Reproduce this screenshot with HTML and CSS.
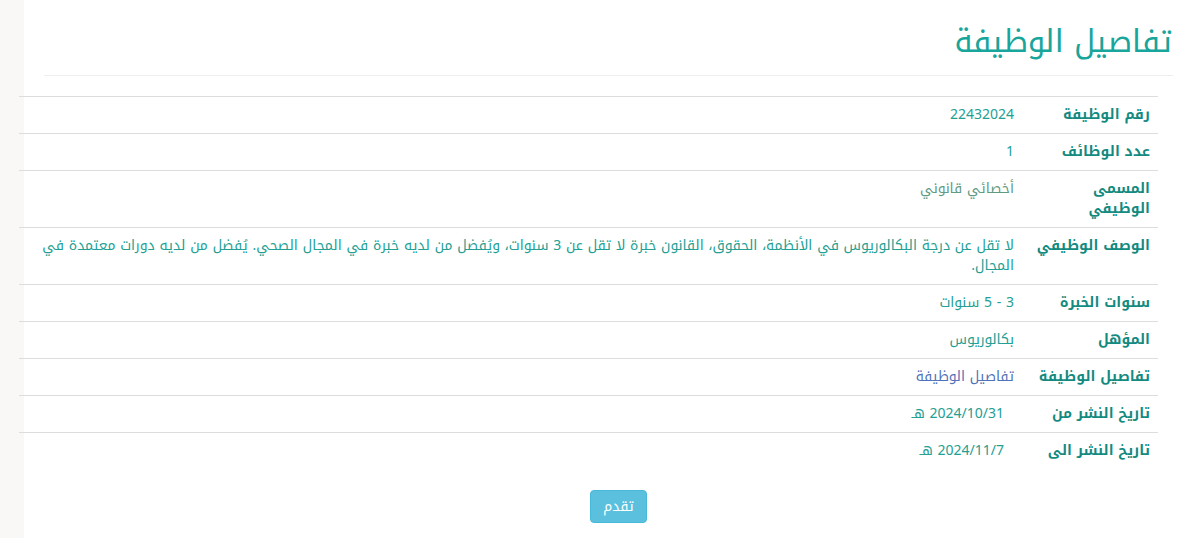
FILE: index.html
```html
<!doctype html>
<html lang="ar" dir="rtl">
<head>
  <title>تفاصيل الوظيفة</title>
  <meta charset="utf-8">
  <link rel="stylesheet" href="styles.css">
</head>
<body>
  <div class="page">
    <div class="page-header">
      <h1>تفاصيل الوظيفة</h1>
    </div>
    <table class="details">
      <tr>
        <th>رقم الوظيفة</th>
        <td>22432024</td>
      </tr>
      <tr>
        <th>عدد الوظائف</th>
        <td>1</td>
      </tr>
      <tr>
        <th>المسمى الوظيفي</th>
        <td class="muted">أخصائي قانوني</td>
      </tr>
      <tr>
        <th>الوصف الوظيفي</th>
        <td>لا تقل عن درجة البكالوريوس في الأنظمة، الحقوق، القانون خبرة لا تقل عن 3 سنوات، ويُفضل من لديه خبرة في المجال الصحي. يُفضل من لديه دورات معتمدة في المجال.</td>
      </tr>
      <tr>
        <th>سنوات الخبرة</th>
        <td>3 - 5 سنوات</td>
      </tr>
      <tr>
        <th>المؤهل</th>
        <td>بكالوريوس</td>
      </tr>
      <tr>
        <th>تفاصيل الوظيفة</th>
        <td><a href="#">تفاصيل الوظيفة</a></td>
      </tr>
      <tr>
        <th>تاريخ النشر من</th>
        <td class="date">2024/10/31 هـ</td>
      </tr>
      <tr>
        <th>تاريخ النشر الى</th>
        <td class="date">2024/11/7 هـ</td>
      </tr>
    </table>
    <div class="actions">
      <button type="button" class="btn-info">تقدم</button>
    </div>
  </div>
</body>
</html>
```

FILE: styles.css
```css
html, body{
  margin: 0;
  padding: 0;
}
body{
  background-color: #f9f8f6;
  font-family: "Noto Kufi Arabic", "Noto Sans Arabic", "Noto Sans", "DejaVu Sans", sans-serif;
  font-size: 14px;
  line-height: 20px;
  direction: rtl;
}
.page{
  margin-left: 24px;
  padding-top: 18px;
  min-height: 520px;
  background-color: #fff;
}
.page-header{
  margin: 0 13px 20px 20px;
  padding-bottom: 9px;
  border-bottom: 1px solid #eee;
}
h1{
  margin: 0 1px 0 0;
  font-size: 31px;
  line-height: 48px;
  font-weight: normal;
  color: #18a59b;
}
.details{
  border-collapse: collapse;
  width: calc(100% - 23px);
  margin: 0 28px 0 0;
}
.details th, .details td{
  border-top: 1px solid #ddd;
  padding: 8px;
  vertical-align: top;
  text-align: right;
}
.details th{
  width: 120px;
  font-size: 14px;
  font-weight: bold;
  color: #138a7f;
}
.details td{
  color: #23a094;
}
.details td.muted{
  color: #5f9a82;
}
.details td.date{
  padding-right: 18px;
}
.details a{
  color: #4f72b8;
  text-decoration: none;
}
.actions{
  display: flex;
  justify-content: center;
  padding: 21px 0 0 27px;
}
.btn-info{
  width: 57px;
  height: 33px;
  border: 1px solid #46b8da;
  border-radius: 4px;
  background-color: #5bc0de;
  color: #fff;
  font-family: inherit;
  font-size: 14px;
  padding: 0;
}
```
